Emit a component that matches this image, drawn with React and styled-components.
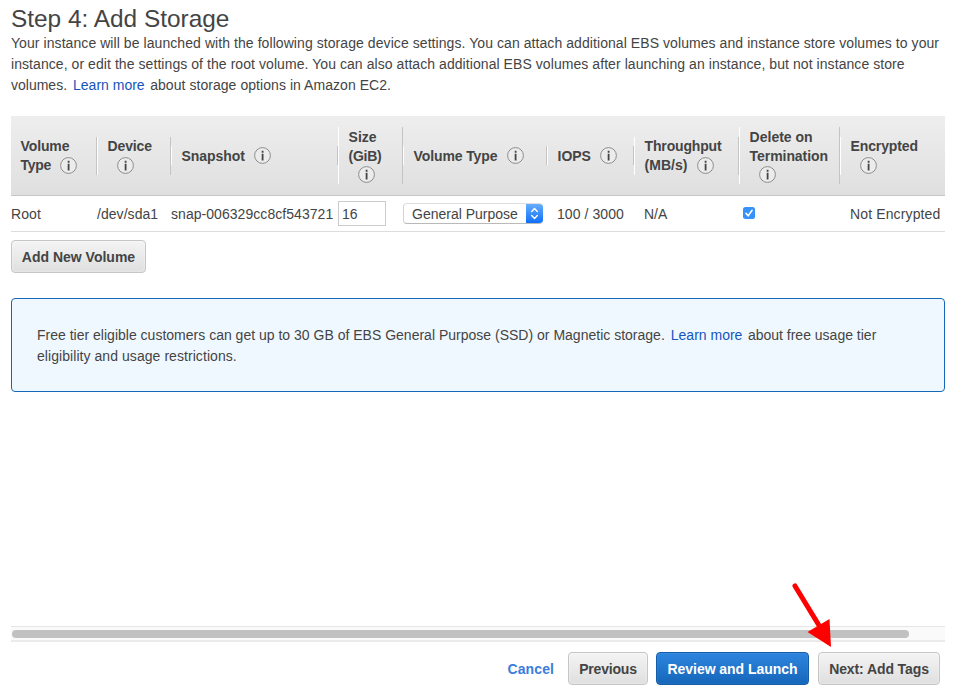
import React from "react";
import styled, { createGlobalStyle, css } from "styled-components";

const GlobalStyle = createGlobalStyle`
  * { box-sizing: border-box; }
  body {
    margin: 0;
    background: #fff;
    color: #444;
    font: 14px/21px "Liberation Sans", "Helvetica Neue", Arial, sans-serif;
    overflow: hidden;
  }
  p, h1 { margin: 0; }
`;

const Page = styled.main`
  display: flex;
  flex-direction: column;
  width: 953px;
  height: 697px;
  padding: 4px 8px 0 11px;
  white-space: nowrap;
`;

const Title = styled.h1`
  height: 29px;
  font-size: 24.4px;
  line-height: 29px;
  font-weight: 400;
`;

const Text = styled.span`
  letter-spacing: ${({ $ls }) => $ls || 0}px;
`;

const Line = styled(Text)`
  display: block;
`;

const Link = styled.a`
  margin: 0 5.5px 0 6px;
  color: #1654bd;
  text-decoration: none;
`;

const Table = styled.section`
  margin-top: 20px;
`;

const columns = css`
  display: grid;
  grid-template-columns: 86px 74px 167px 65px 144px 87px 105px 101px 105px;
  align-items: center;
`;

const TableHead = styled.div`
  ${columns}
  height: 80px;
  border-bottom: 1px solid #c6c6c6;
  background: linear-gradient(#eeeeee, #dfdfdf);
`;

const TableRow = styled.div`
  ${columns}
  height: 36px;
  border-bottom: 1px solid #ddd;
`;

const HeadCell = styled.div`
  padding: 0 0 0 9.6px;
  border-left: 1px solid #fff;
  border-right: 1px solid #c4c4c4;
  font-weight: 700;
  line-height: 19px;
  &:first-child { border-left: 0; }
  &:last-child { border-right: 0; }
`;

const InfoIcon = styled.svg`
  display: block;
  flex: none;
  width: 17px;
  height: 17px;
  margin: 1px 0 0 9.4px;
`;

const HeadLine = styled.div`
  display: flex;
  align-items: center;
  height: 19px;
  padding-top: ${({ $odd }) => ($odd ? 2 : 0)}px;
  ${InfoIcon} {
    margin-top: ${({ $odd }) => ($odd ? -2 : 1)}px;
  }
`;

const Cell = styled.div`
  display: flex;
  align-items: center;
  padding: ${({ $pad }) => $pad || "0"};
`;

const Value = styled(Text)`
  padding-top: 2px;
`;

const SizeInput = styled.input`
  width: 48px;
  height: 25px;
  padding: 1px 3px 0 3px;
  border: 1px solid #ccc;
  border-radius: 0;
  background: #fff;
  color: #444;
  font: inherit;
  outline: 0;
`;

const Select = styled.button`
  display: flex;
  align-items: center;
  justify-content: space-between;
  width: 140px;
  height: 21px;
  margin-top: -1px;
  padding: 0 0 0 8px;
  overflow: hidden;
  border: 1px solid #d4d4d4;
  border-top-color: #dedede;
  border-bottom-color: #b9b9b9;
  border-right: 0;
  border-radius: 4px;
  background: #fff;
  color: #444;
  font: inherit;
  line-height: 20px;
`;

const Stepper = styled.svg`
  width: 17px;
  height: 21px;
  margin: -1px 0;
  background: linear-gradient(#6bb1fa, #0a6cfb);
`;

const Check = styled.svg`
  display: block;
  width: 12px;
  height: 12px;
  margin-top: -1px;
`;

const Button = styled.button`
  width: ${({ $w }) => $w}px;
  height: 33px;
  padding: 2px 0 0;
  border: 1px solid ${({ $primary }) => ($primary ? "#135da9" : "#c6c6c6")};
  border-radius: 4px;
  background: ${({ $primary }) =>
    $primary ? "linear-gradient(#2e85de, #1566ba)" : "linear-gradient(#f4f4f4, #dfdfdf)"};
  box-shadow: inset 0 0 2px ${({ $primary }) => ($primary ? "rgba(255,255,255,.15)" : "rgba(255,255,255,.8)")};
  color: ${({ $primary }) => ($primary ? "#fff" : "#444")};
  font: inherit;
  font-weight: 700;
`;

const AddButton = styled(Button)`
  margin-top: 8px;
`;

const Notice = styled.section`
  height: 94px;
  margin-top: 25px;
  padding: 26px 25px 0;
  border: 1px solid #1468ba;
  border-radius: 4px;
  background: #f0f8ff;
`;

const ScrollTrack = styled.div`
  height: 16px;
  margin-top: auto;
  padding: 3px 1px 0;
  border-top: 1px solid #e6e6e6;
  border-bottom: 2px solid #ebebeb;
  background: #fafafa;
`;

const ScrollThumb = styled.div`
  width: 897px;
  height: 8px;
  border-radius: 4px;
  background: #c1c1c1;
`;

const Footer = styled.footer`
  position: relative;
  display: flex;
  justify-content: flex-end;
  height: 55px;
  padding: 10px 5px 0 0;
`;

const Cancel = styled.a`
  margin: 7px 14px 0 0;
  color: #3a7ddb;
  font-weight: 700;
`;

const FooterButton = styled(Button)`
  margin-right: ${({ $gap }) => $gap || 0}px;
`;

const Arrow = styled.svg`
  position: absolute;
  left: 780px;
  top: -60px;
  width: 44px;
  height: 66px;
`;

const Info = () => (
  <InfoIcon viewBox="0 0 17 17">
    <circle cx="8.5" cy="8.5" r="7.9" fill="#ececec" stroke="#8c8c8c" />
    <path d="M7.7 3.800h1.800v1.900h-1.800zM7.700 6.700h1.800v6.800h-1.800z" fill="#444" />
  </InfoIcon>
);

const HEADERS = [
  [["Volume", -0.13], ["Type", -0.35, true]],
  [["Device", -0.15], ["", 0, true]],
  [["Snapshot", -0.06, true]],
  [["Size", -0.05], ["(GiB)", -0.3], ["", 0, true]],
  [["Volume Type", -0.12, true]],
  [["IOPS", -0.03, true]],
  [["Throughput", -0.17], ["(MB/s)", 0, true]],
  [["Delete on", 0], ["Termination", -0.06], ["", 0, true]],
  [["Encrypted", -0.14], ["", 0, true]],
];

export default function App() {
  return (
    <>
      <GlobalStyle />
      <Page>
        <Title>Step 4: Add Storage</Title>
        <p>
          <Line $ls={0.07}>
            Your instance will be launched with the following storage device settings. You can attach additional EBS
            volumes and instance store volumes to your
          </Line>
          <Line $ls={0.066}>
            instance, or edit the settings of the root volume. You can also attach additional EBS volumes after
            launching an instance, but not instance store
          </Line>
          <Line>
            <Text>volumes.</Text>
            <Link>Learn more</Link>
            <Text $ls={0.055}>about storage options in Amazon EC2.</Text>
          </Line>
        </p>

        <Table>
          <TableHead>
            {HEADERS.map((lines, i) => (
              <HeadCell key={i}>
                {lines.map(([label, ls, icon]) => (
                  <HeadLine key={label} $odd={lines.length % 2 === 1}>
                    <Text $ls={ls}>{label}</Text>
                    {icon && <Info />}
                  </HeadLine>
                ))}
              </HeadCell>
            ))}
          </TableHead>
          <TableRow>
            <Cell><Value $ls={0.1}>Root</Value></Cell>
            <Cell><Value $ls={0.05}>/dev/sda1</Value></Cell>
            <Cell $pad="0"><Value $ls={0.05}>snap-006329cc8cf543721</Value></Cell>
            <Cell><SizeInput defaultValue="16" /></Cell>
            <Cell>
              <Select>
                <Value>General Purpose</Value>
                <Stepper viewBox="0 0 17 21" fill="none" stroke="#fff" strokeWidth="1.4" strokeLinecap="round" strokeLinejoin="round">
                  <path d="M5.7 8.4 8.5 5.4l2.8 3M5.7 12.6l2.8 3 2.8-3" />
                </Stepper>
              </Select>
            </Cell>
            <Cell $pad="0 0 0 10px"><Value $ls={0.07}>100 / 3000</Value></Cell>
            <Cell $pad="0 0 0 10px"><Value>N/A</Value></Cell>
            <Cell $pad="0 0 0 4px">
              <Check viewBox="0 0 12 12">
                <rect width="12" height="12" rx="2.5" fill="#3591fb" />
                <path d="M3 6.4l2.2 2.3L9.1 3.3" fill="none" stroke="#fff" strokeWidth="1.6" strokeLinecap="round" />
              </Check>
            </Cell>
            <Cell $pad="0 0 0 10px"><Value $ls={0.13}>Not Encrypted</Value></Cell>
          </TableRow>
        </Table>

        <AddButton $w={135}>Add New Volume</AddButton>

        <Notice>
          <Line>
            <Text $ls={0.006}>
              Free tier eligible customers can get up to 30 GB of EBS General Purpose (SSD) or Magnetic storage.
            </Text>
            <Link>Learn more</Link>
            <Text>about free usage tier</Text>
          </Line>
          <Line $ls={0.06}>eligibility and usage restrictions.</Line>
        </Notice>

        <ScrollTrack>
          <ScrollThumb />
        </ScrollTrack>
        <Footer>
          <Cancel><Text $ls={0.09}>Cancel</Text></Cancel>
          <FooterButton $w={80} $gap={8}><Text $ls={-0.2}>Previous</Text></FooterButton>
          <FooterButton $w={153} $gap={9} $primary><Text $ls={-0.04}>Review and Launch</Text></FooterButton>
          <FooterButton $w={122}><Text $ls={-0.1}>Next: Add Tags</Text></FooterButton>
          <Arrow viewBox="0 0 44 66">
            <path d="M4 4 29 45" stroke="#fe0000" strokeWidth="5" strokeLinecap="round" />
            <path d="M40 65 16.500 50 38.500 37z" fill="#fe0000" />
          </Arrow>
        </Footer>
      </Page>
    </>
  );
}
